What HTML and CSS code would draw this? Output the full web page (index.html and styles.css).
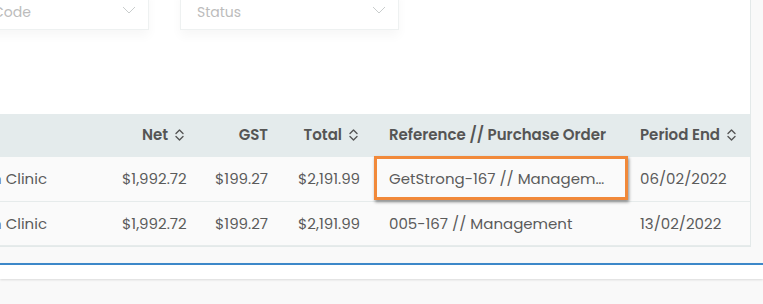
FILE: index.html
```html
<!DOCTYPE html>
<html>
<head>
<meta charset="utf-8">
<link rel="stylesheet" href="styles.css">
</head>
<body>
<div class="page">
  <div class="card">
    <div class="filters">
      <div class="select select-code">
        <span class="placeholder">Code</span>
        <svg class="chev" width="14" height="8" viewBox="0 0 14 8"><path d="M1 1 L7 7 L13 1" fill="none" stroke="#c9cdcd" stroke-width="1"/></svg>
      </div>
      <div class="select select-status">
        <span class="placeholder">Status</span>
        <svg class="chev" width="14" height="8" viewBox="0 0 14 8"><path d="M1 1 L7 7 L13 1" fill="none" stroke="#c9cdcd" stroke-width="1"/></svg>
      </div>
    </div>
    <table class="grid">
      <colgroup>
        <col class="c-name"><col class="c-net"><col class="c-gst"><col class="c-total"><col class="c-ref"><col class="c-period">
      </colgroup>
      <thead>
        <tr>
          <th class="name"></th>
          <th class="num"><span class="th-in">Net <svg class="sort" width="11" height="14" viewBox="0 0 11 14"><path d="M2 5.5 L5.5 2 L9 5.5 M2 8.5 L5.5 12 L9 8.5" fill="none" stroke="#555" stroke-width="1.4" stroke-linecap="round" stroke-linejoin="round"/></svg></span></th>
          <th class="num">GST</th>
          <th class="num"><span class="th-in">Total <svg class="sort" width="11" height="14" viewBox="0 0 11 14"><path d="M2 5.5 L5.5 2 L9 5.5 M2 8.5 L5.5 12 L9 8.5" fill="none" stroke="#555" stroke-width="1.4" stroke-linecap="round" stroke-linejoin="round"/></svg></span></th>
          <th>Reference // Purchase Order</th>
          <th><span class="th-in">Period End <svg class="sort" width="11" height="14" viewBox="0 0 11 14"><path d="M2 5.5 L5.5 2 L9 5.5 M2 8.5 L5.5 12 L9 8.5" fill="none" stroke="#555" stroke-width="1.4" stroke-linecap="round" stroke-linejoin="round"/></svg></span></th>
        </tr>
      </thead>
      <tbody>
        <tr>
          <td class="name"><div class="name-in">GetStrong Health Clinic</div></td>
          <td class="num">$1,992.72</td>
          <td class="num">$199.27</td>
          <td class="num">$2,191.99</td>
          <td class="ref focused"><span class="trunc">GetStrong-167 // Management Fees</span></td>
          <td>06/02/2022</td>
        </tr>
        <tr>
          <td class="name"><div class="name-in">GetStrong Health Clinic</div></td>
          <td class="num">$1,992.72</td>
          <td class="num">$199.27</td>
          <td class="num">$2,191.99</td>
          <td class="ref"><span class="trunc">005-167 // Management</span></td>
          <td>13/02/2022</td>
        </tr>
      </tbody>
    </table>
  </div>
  <div class="footer-bar"></div>
</div>
</body>
</html>
```

FILE: styles.css
```css
html, body {
  margin: 0;
  padding: 0;
}
body {
  background: #f9f9f9;
  font-family: "Poppins", "Open Sans", "Liberation Sans", sans-serif;
  overflow: hidden;
  width: 763px;
  height: 304px;
}
.page {
  margin-top: -26px;
  position: relative;
}
.card {
  margin-left: -40px;
  width: 790px;
  background: #ffffff;
  border-right: 1px solid #e3e9e9;
  border-bottom: 1px solid #e3e9e9;
  padding-top: 16px;
}
.filters {
  display: flex;
  gap: 31px;
  padding-left: 16px;
  margin-bottom: 84px;
}
.select {
  height: 40px;
  box-sizing: border-box;
  border: 1px solid #eef1f1;
  background: #fff;
  box-shadow: 0 6px 10px rgba(0, 0, 0, 0.035);
  display: flex;
  align-items: center;
  justify-content: space-between;
  padding: 0 12px 6px 16px;
}
.select-code { width: 173px; }
.select-status { width: 219px; }
.placeholder {
  color: #bcbcbc;
  font-size: 14px;
  margin-top: 10px;
}
.chev { margin-top: 5px; }
.grid {
  border-collapse: collapse;
  table-layout: fixed;
  width: 790px;
  font-size: 15px;
  color: #5b5b5b;
}
.c-name { width: 147px; }
.c-net { width: 93px; }
.c-gst { width: 83px; }
.c-total { width: 91px; }
.c-ref { width: 251px; }
.c-period { width: 125px; }
thead tr {
  background: #e4ebec;
  height: 43px;
}
th {
  font-weight: 600;
  color: #555555;
  text-align: left;
  padding: 0 15px 2px;
  white-space: nowrap;
}
.th-in {
  display: inline-flex;
  align-items: center;
  gap: 6px;
}
.sort { flex: none; }
tbody tr {
  background: #fafafa;
  height: 44px;
  border-bottom: 1px solid #e6ebeb;
}
td {
  padding: 0 15px;
  white-space: nowrap;
}
.num { text-align: right; }
td.name {
  padding-right: 60px;
}
.name-in {
  display: flex;
  justify-content: flex-end;
  overflow: hidden;
}
.ref { position: relative; }
.trunc {
  display: block;
  overflow: hidden;
  text-overflow: ellipsis;
  white-space: nowrap;
}
.focused::after {
  content: "";
  position: absolute;
  left: 0;
  top: -1px;
  right: -3px;
  bottom: 1px;
  border: 3px solid #f1893a;
  box-shadow: 1px 2px 3px rgba(0, 0, 0, 0.45);
}
.footer-bar {
  margin-top: 16px;
  height: 14px;
  background: #fff;
  border-top: 2px solid #3d88c9;
  box-shadow: 0 1px 2px rgba(0, 0, 0, 0.12);
}
```
